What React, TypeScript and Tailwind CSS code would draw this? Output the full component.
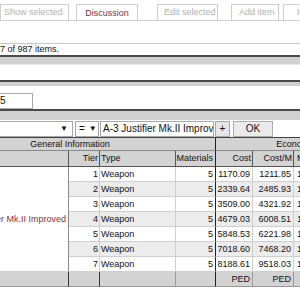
const rows = [
  { tier: 1, cost: "1170.09", costM: "1211.85", extra: "1.04" },
  { tier: 2, cost: "2339.64", costM: "2485.93", extra: "1.06" },
  { tier: 3, cost: "3509.00", costM: "4321.92", extra: "1.23" },
  { tier: 4, cost: "4679.03", costM: "6008.51", extra: "1.28" },
  { tier: 5, cost: "5848.53", costM: "6221.98", extra: "1.06" },
  { tier: 6, cost: "7018.60", costM: "7468.20", extra: "1.06" },
  { tier: 7, cost: "8188.61", costM: "9518.03", extra: "1.16" },
];

const App = () => {
  return (
    <div className="w-[300px] h-[300px] overflow-hidden bg-white text-[9px] leading-none text-[#111] font-['Liberation_Sans',Arial,sans-serif]">
      {/* toolbar tabs */}
      <div className="pt-[4px]">
        <div className="flex items-start h-[17px] border-b border-[#cfcfcf] whitespace-nowrap overflow-hidden">
          <div className="shrink-0 w-[69px] h-[16px] border border-b-0 border-[#cfcfcf] flex items-center pl-[3px] text-[#b3b3b3]">Show selected</div>
          <div className="shrink-0 ml-[7px] w-[62px] h-[17px] border border-b-0 border-[#cfcfcf] bg-white flex items-center justify-center text-[#9a2b3b]">Discussion</div>
          <div className="shrink-0 ml-[19px] w-[61px] h-[16px] border border-b-0 border-[#cfcfcf] flex items-center pl-[6px] text-[#b3b3b3]">Edit selected</div>
          <div className="shrink-0 ml-[13px] w-[48px] h-[16px] border border-b-0 border-[#cfcfcf] flex items-center pl-[7px] text-[#b3b3b3]">Add item</div>
          <div className="shrink-0 ml-[4px] w-[40px] h-[16px] border border-b-0 border-[#cfcfcf] flex items-center pl-[13px] text-[#b3b3b3]">Help</div>
        </div>
      </div>

      {/* status */}
      <div className="h-[22px]" />
      <div className="border-t border-[#c8c8c8] h-[12px] flex items-center whitespace-nowrap">7 of 987 items.</div>

      {/* collapsed panels */}
      <div className="border-t-2 border-[#4a4a4a] h-[9px] bg-[#d0d0d0]" />
      <div className="border-t border-[#e6e6e6] h-[16px]" />
      <div className="border-t-2 border-[#4a4a4a] h-[6px] bg-[#d0d0d0]" />
      <div className="h-[7px]" />
      <div className="h-[16px]">
        <div className="w-[33px] h-[16px] border border-l-0 border-[#a8a8a8] flex items-center text-[10px]">5</div>
      </div>
      <div className="border-t-2 border-[#4a4a4a] h-[11px] bg-[#d0d0d0]" />

      {/* filter row */}
      <div className="flex items-center h-[17px] pt-[1px] text-[10px] whitespace-nowrap">
        <div className="shrink-0 w-[73px] h-[16px] border border-l-0 border-[#a8a8a8] flex items-center justify-end pr-[4px] text-[8px]">▼</div>
        <div className="shrink-0 ml-[2px] w-[24px] h-[16px] border border-[#a8a8a8] flex items-center pl-[3px] gap-[4px]">
          <span>=</span>
          <span className="text-[8px]">▼</span>
        </div>
        <div className="shrink-0 ml-[1px] w-[114px] h-[16px] border border-[#a8a8a8] flex items-center pl-[2px] overflow-hidden">A-3 Justifier Mk.II Improved</div>
        <div className="shrink-0 ml-[1px] w-[15px] h-[16px] border border-[#a8a8a8] bg-[#e6e6e6] flex items-center justify-center">+</div>
        <div className="shrink-0 ml-[3px] w-[40px] h-[16px] border border-[#adadad] bg-[#ebebeb] flex items-center justify-center">OK</div>
      </div>

      {/* results table */}
      <div className="-ml-[75px] w-[383px] grid grid-cols-[144px_31px_76px_40px_37px_41px_80px] grid-rows-[13px_16px_repeat(8,15px)] border-t border-[#444] whitespace-nowrap">
        <div className="col-span-4 bg-[#d3d3d3] border-b border-r border-b-[#8a8a8a] border-r-[#222] flex items-center justify-center">General Information</div>
        <div className="col-span-3 bg-[#d3d3d3] border-b border-[#8a8a8a] flex items-center justify-center">Economy</div>

        <div className="bg-[#d3d3d3] border-b border-r border-[#555]" />
        <div className="bg-[#d3d3d3] border-b border-r border-[#555] flex items-center justify-end pr-[1px]">Tier</div>
        <div className="bg-[#d3d3d3] border-b border-r border-[#555] flex items-center pl-[1px]">Type</div>
        <div className="bg-[#d3d3d3] border-b border-r border-b-[#555] border-r-[#222] flex items-center justify-end pr-[2px]">Materials</div>
        <div className="bg-[#d3d3d3] border-b border-r border-[#555] flex items-center justify-end pr-[1px]">Cost</div>
        <div className="bg-[#d3d3d3] border-b border-r border-[#555] flex items-center justify-end pr-[1px]">Cost/M</div>
        <div className="bg-[#d3d3d3] border-b border-[#555] flex items-center pl-[3px]">Markup</div>

        <div className="col-start-1 row-start-3 row-span-7 bg-white border-r border-b border-r-[#8a8a8a] border-b-[#cfcfcf] flex items-center justify-end pr-[2px] text-[#9b2c3e]">A-3 Justifier Mk.II Improved</div>

        {rows.map((r, i) => {
          const bg = i % 2 === 1 ? "bg-[#ececec]" : "bg-white";
          return [
            <div key={`t${i}`} className={`${bg} border-b border-r border-[#cfcfcf] flex items-center justify-end pr-[1px]`}>{r.tier}</div>,
            <div key={`y${i}`} className={`${bg} border-b border-r border-[#cfcfcf] flex items-center pl-[1px]`}>Weapon</div>,
            <div key={`m${i}`} className={`${bg} border-b border-r border-b-[#cfcfcf] border-r-[#222] flex items-center justify-end pr-[2px]`}>5</div>,
            <div key={`c${i}`} className={`${bg} border-b border-r border-[#cfcfcf] flex items-center justify-end pr-[2px]`}>{r.cost}</div>,
            <div key={`k${i}`} className={`${bg} border-b border-r border-[#cfcfcf] flex items-center justify-end pr-[2px]`}>{r.costM}</div>,
            <div key={`x${i}`} className={`${bg} border-b border-[#cfcfcf] flex items-center pl-[3px]`}>{r.extra}</div>,
          ];
        })}

        <div className="bg-[#d3d3d3] border-b border-r border-b-[#999] border-r-[#333]" />
        <div className="bg-[#d3d3d3] border-b border-r border-b-[#999] border-r-[#333]" />
        <div className="bg-[#d3d3d3] border-b border-r border-[#999]" />
        <div className="bg-[#d3d3d3] border-b border-r border-b-[#999] border-r-[#222]" />
        <div className="bg-[#d3d3d3] border-b border-r border-[#999] flex items-center justify-end pr-[2px]">PED</div>
        <div className="bg-[#d3d3d3] border-b border-r border-[#999] flex items-center justify-end pr-[2px]">PED</div>
        <div className="bg-[#d3d3d3] border-b border-[#999]" />
      </div>
    </div>
  );
};

export default App;
